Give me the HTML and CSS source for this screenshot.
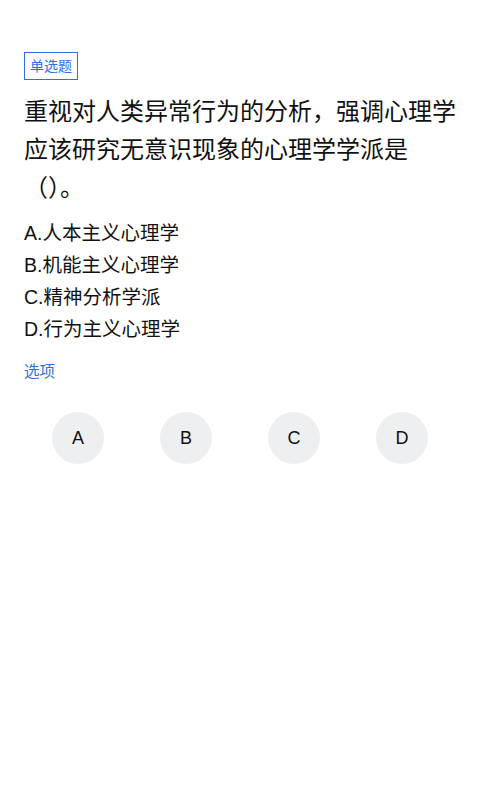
FILE: index.html
```html
<!DOCTYPE html>
<html lang="zh-CN">
<head>
<meta charset="utf-8">
<title>单选题</title>
<link rel="stylesheet" href="styles.css">
</head>
<body>
<main class="page">
  <div class="tag-row"><span class="tag">单选题</span></div>
  <p class="question">重视对人类异常行为的分析，强调心理学应该研究无意识现象的心理学学派是（）。</p>
  <ul class="options">
    <li>A.人本主义心理学</li>
    <li>B.机能主义心理学</li>
    <li>C.精神分析学派</li>
    <li>D.行为主义心理学</li>
  </ul>
  <div class="label">选项</div>
  <div class="answers">
    <div class="cell"><span class="circle">A</span></div>
    <div class="cell"><span class="circle">B</span></div>
    <div class="cell"><span class="circle">C</span></div>
    <div class="cell"><span class="circle">D</span></div>
  </div>
</main>
</body>
</html>
```
FILE: styles.css
```css
html, body {
  margin: 0;
  padding: 0;
  background: #ffffff;
}
body {
  font-family: "Liberation Sans", "Noto Sans CJK SC", sans-serif;
  color: #111111;
}
.page {
  padding: 52px 24px 0;
}
.tag-row {
  display: flex;
}
.tag {
  display: block;
  box-sizing: border-box;
  height: 28px;
  line-height: 26px;
  padding: 0 5px;
  border: 1px solid #2f6fe4;
  color: #2f6fe4;
  font-size: 14px;
}
.question {
  margin: 13px 0 0;
  font-size: 24px;
  line-height: 38px;
}
.options {
  list-style: none;
  margin: 10px 0 0;
  padding: 0;
  font-size: 19.5px;
  line-height: 32px;
}
.label {
  margin-top: 16px;
  font-size: 15.5px;
  line-height: 22px;
  color: #2f6fe4;
}
.answers {
  margin-top: 29px;
  display: grid;
  grid-template-columns: repeat(4, 1fr);
}
.cell {
  display: flex;
  justify-content: center;
}
.circle {
  width: 52px;
  height: 52px;
  border-radius: 50%;
  background: #eeeff1;
  display: flex;
  align-items: center;
  justify-content: center;
  font-size: 18px;
  color: #111111;
}
```
